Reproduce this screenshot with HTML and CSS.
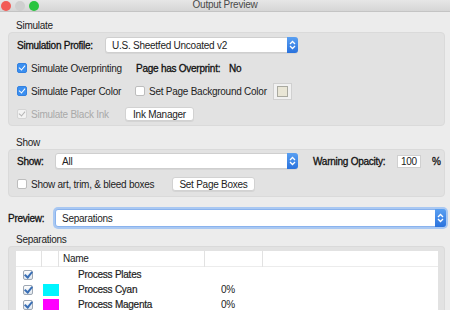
FILE: index.html
```html
<!DOCTYPE html>
<html lang="en">
<head>
  <meta charset="UTF-8" />
  <title>Output Preview</title>
  <link rel="stylesheet" href="styles.css">
</head>
<body>
  <div class="window">
    <div class="titlebar">
      <div class="lights">
        <span class="light red"></span>
        <span class="light gray"></span>
        <span class="light green"></span>
      </div>
      <div class="title">Output Preview</div>
    </div>

    <div class="section-label first">Simulate</div>
    <div class="group sim">
      <div class="row">
        <span class="lbl strong w-profile">Simulation Profile:</span>
        <div class="select w-sel1">
          <span>U.S. Sheetfed Uncoated v2</span>
          <span class="stepper"><svg width="7" height="10" viewBox="0 0 7 10"><path d="M1 4 L3.5 1.5 L6 4 M1 6 L3.5 8.5 L6 6" fill="none" stroke="#fff" stroke-width="1.3"/></svg></span>
        </div>
      </div>
      <div class="row">
        <label class="check w-c1"><span class="box on"></span>Simulate Overprinting</label>
        <span class="lbl strong w-over">Page has Overprint:</span>
        <span class="lbl strong">No</span>
      </div>
      <div class="row">
        <label class="check w-c1b"><span class="box on"></span>Simulate Paper Color</label>
        <label class="check w-c2"><span class="box"></span>Set Page Background Color</label>
        <span class="swatch"><span class="swatch-inner"></span></span>
      </div>
      <div class="row">
        <label class="check disabled w-c3"><span class="box dis"></span>Simulate Black Ink</label>
        <button class="btn w-ink">Ink Manager</button>
      </div>
    </div>

    <div class="section-label show-label">Show</div>
    <div class="group show">
      <div class="row">
        <span class="lbl strong w-show">Show:</span>
        <div class="select w-sel2">
          <span>All</span>
          <span class="stepper"><svg width="7" height="10" viewBox="0 0 7 10"><path d="M1 4 L3.5 1.5 L6 4 M1 6 L3.5 8.5 L6 6" fill="none" stroke="#fff" stroke-width="1.3"/></svg></span>
        </div>
        <span class="lbl strong w-warn">Warning Opacity:</span>
        <span class="num">100</span>
        <span class="lbl strong pct">%</span>
      </div>
      <div class="row">
        <label class="check w-c4"><span class="box"></span>Show art, trim, &amp; bleed boxes</label>
        <button class="btn w-boxes">Set Page Boxes</button>
      </div>
    </div>

    <div class="preview-row">
      <span class="lbl strong w-preview">Preview:</span>
      <div class="select focus w-sel3">
        <span>Separations</span>
        <span class="stepper"><svg width="7" height="10" viewBox="0 0 7 10"><path d="M1 4 L3.5 1.5 L6 4 M1 6 L3.5 8.5 L6 6" fill="none" stroke="#fff" stroke-width="1.3"/></svg></span>
      </div>
    </div>

    <div class="section-label sep-label">Separations</div>
    <div class="group seps">
      <div class="table">
        <div class="thead">
          <span class="c-check"></span>
          <span class="c-swatch"></span>
          <span class="c-name">Name</span>
          <span class="c-pct"></span>
          <span class="c-rest"></span>
        </div>
        <div class="trow">
          <span class="c-check"><span class="tick"></span></span>
          <span class="c-swatch"></span>
          <span class="c-name indent">Process Plates</span>
          <span class="c-pct"></span>
        </div>
        <div class="trow">
          <span class="c-check"><span class="tick"></span></span>
          <span class="c-swatch"><span class="chip cyan"></span></span>
          <span class="c-name indent">Process Cyan</span>
          <span class="c-pct">0%</span>
        </div>
        <div class="trow">
          <span class="c-check"><span class="tick"></span></span>
          <span class="c-swatch"><span class="chip magenta"></span></span>
          <span class="c-name indent">Process Magenta</span>
          <span class="c-pct">0%</span>
        </div>
      </div>
    </div>
  </div>
</body>
</html>
```

FILE: styles.css
```css
* { box-sizing: border-box; }
body {
  margin: 0;
  font-family: "Liberation Sans", Arial, sans-serif;
  font-size: 10px;
  letter-spacing: -0.25px;
  color: #222;
  background: #ececec;
  overflow: hidden;
}

.window {
  width: 450px;
  height: 310px;
  background: #ececec;
}

.titlebar {
  height: 12px;
  display: flex;
  align-items: center;
  justify-content: center;
  position: relative;
  background: linear-gradient(#e6e6e6, #d6d6d6);
  border-bottom: 1px solid #c4c4c4;
}
.title {
  color: #4a4a4a;
  font-size: 10px;
  margin-top: -2px;
}
.lights {
  position: absolute;
  left: 1px;
  top: 1px;
  display: flex;
  gap: 4px;
}
.light {
  width: 10px;
  height: 10px;
  border-radius: 50%;
}
.red { background: #f25b55; }
.gray { background: #cfcfcf; }
.green { background: #2ac43f; }

.section-label {
  height: 12px;
  line-height: 12px;
  padding-left: 16px;
}
.section-label.first { margin-top: 8px; }
.section-label.show-label { margin-top: 11px; }
.section-label.sep-label { margin-top: 7px; }

.group {
  margin: 0 5px 0 8px;
  background: #e2e2e2;
  border: 1px solid #dadada;
  border-radius: 4px;
}
.group.sim {
  padding: 4px 0 3px 8px;
  display: flex;
  flex-direction: column;
  gap: 7px;
}
.group.show {
  padding: 3px 0 4px 8px;
  display: flex;
  flex-direction: column;
  gap: 7px;
}
.group.seps {
  padding: 4px 6px 0 7px;
  height: 70px;
  border-bottom: none;
  border-radius: 4px 4px 0 0;
}

.row {
  height: 16px;
  display: flex;
  align-items: center;
}
.lbl { white-space: nowrap; }
.strong {
  color: #111;
  -webkit-text-stroke: 0.3px #111;
}

.w-profile { width: 88px; }
.w-sel1 { width: 193px; }
.w-c1 { width: 119px; }
.w-over { width: 93px; }
.w-c1b { width: 118px; }
.w-c2 { width: 138px; }
.w-c3 { width: 108px; }
.w-ink { width: 69px; }
.w-show { width: 38px; }
.w-sel2 { width: 243px; }
.w-warn { width: 84px; margin-left: 15px; }
.w-c4 { width: 155px; }
.w-boxes { width: 83px; }
.w-preview { width: 47px; }
.w-sel3 { width: 391px; }

.check {
  display: flex;
  align-items: center;
  gap: 4px;
  white-space: nowrap;
}
.check.disabled { color: #a9a9a9; }

.box {
  width: 10px;
  height: 10px;
  border-radius: 2px;
  background: #fff;
  border: 1px solid #bdbdbd;
  position: relative;
  flex: none;
}
.box.on {
  background: #3b8ff0;
  border-color: #3381e0;
}
.box.on::after,
.box.dis::after {
  content: "";
  position: absolute;
  left: 2px;
  top: 0px;
  width: 3px;
  height: 5px;
  border: solid #fff;
  border-width: 0 1.5px 1.5px 0;
  transform: rotate(40deg);
}
.box.dis {
  background: #f3f3f3;
  border-color: #d4d4d4;
}
.box.dis::after { border-color: #b5b5b5; }

.select {
  height: 16px;
  background: #fff;
  border: 1px solid #cfcfcf;
  border-radius: 3px;
  display: flex;
  align-items: center;
  justify-content: space-between;
  padding-left: 6px;
  box-shadow: 0 1px 0 rgba(0,0,0,0.05);
}
.select .stepper {
  width: 11px;
  height: 16px;
  margin-right: -1px;
  border-radius: 0 3px 3px 0;
  background: linear-gradient(#5aa0f2, #2a72dd);
  display: flex;
  align-items: center;
  justify-content: center;
}
.select.focus {
  height: 18px;
  border-color: #8ab3ee;
  box-shadow: 0 0 0 2px #a9c8f2;
}
.select.focus .stepper { height: 18px; }

.btn {
  height: 14px;
  padding: 0;
  font: inherit;
  letter-spacing: -0.25px;
  color: #222;
  background: #fff;
  border: 1px solid #d2d2d2;
  border-radius: 3px;
  box-shadow: 0 1px 0 rgba(0,0,0,0.06);
}

.swatch {
  width: 19px;
  height: 17px;
  background: #f1f1f1;
  border: 1px solid #d0d0d0;
  display: flex;
  align-items: center;
  justify-content: center;
}
.swatch-inner {
  width: 11px;
  height: 11px;
  background: #e9e6d6;
  border: 1px solid #a9a9a0;
}

.num {
  width: 24px;
  height: 13px;
  line-height: 11px;
  background: #fff;
  border: 1px solid #d0d0d0;
  padding-left: 3px;
  margin-right: 11px;
}

.preview-row {
  margin-top: 12px;
  height: 18px;
  display: flex;
  align-items: center;
  padding-left: 8px;
}

.table {
  background: #fff;
  height: 66px;
}
.thead {
  height: 16px;
  display: flex;
  align-items: center;
  border-bottom: 1px solid #ececec;
}
.thead > span {
  height: 16px;
  line-height: 16px;
  border-right: 1px solid #e2e2e2;
}
.thead .c-rest { border-right: none; flex: 1; }
.trow {
  height: 15px;
  display: flex;
  align-items: center;
}
.c-check {
  width: 26px;
  display: flex;
  justify-content: center;
  padding-right: 3px;
}
.c-swatch {
  width: 17px;
  display: flex;
  align-items: center;
}
.c-name {
  width: 146px;
  padding-left: 4px;
}
.c-name.indent {
  padding-left: 19px;
  -webkit-text-stroke: 0.2px #222;
}
.c-pct {
  width: 58px;
  padding-left: 16px;
}
.tick {
  width: 10px;
  height: 10px;
  border: 1px solid #9ea7b3;
  border-radius: 2px;
  background: linear-gradient(#fdfdfd, #dfe6ee);
  position: relative;
}
.tick::after {
  content: "";
  position: absolute;
  left: 2px;
  top: -1px;
  width: 3px;
  height: 6px;
  border: solid #3a6fb5;
  border-width: 0 2px 2px 0;
  transform: rotate(40deg);
}
.chip {
  width: 16px;
  height: 12px;
  margin-left: 1px;
}
.cyan { background: #00f5ff; }
.magenta { background: #ff00ff; }
```
